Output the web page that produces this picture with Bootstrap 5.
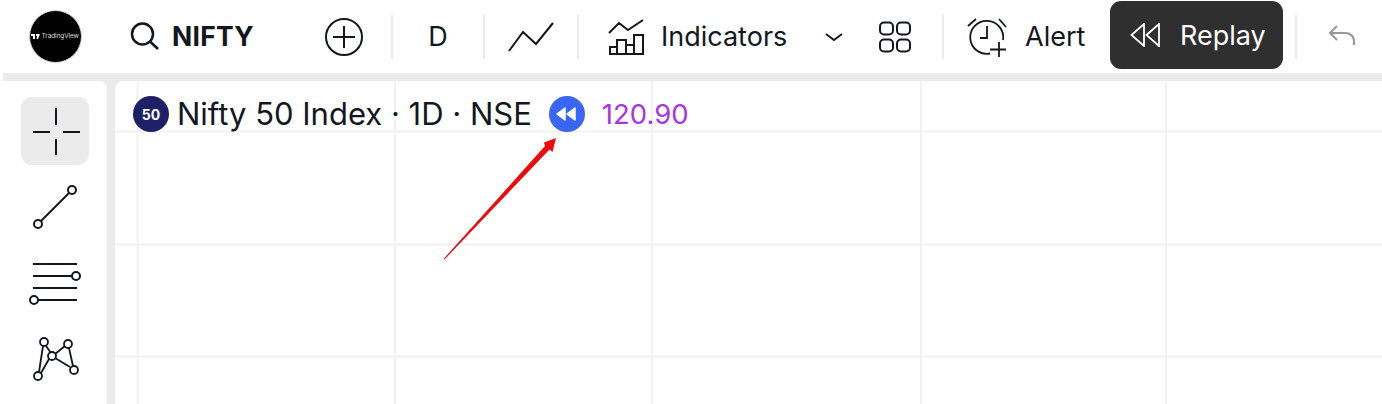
<!DOCTYPE html>
<html lang="en">
<head>
    <meta charset="UTF-8">
    <title>Nifty 50 Replay</title>
    <link href="https://cdn.jsdelivr.net/npm/bootstrap@5.3.3/dist/css/bootstrap.min.css" rel="stylesheet">
    <style>
        body {
            background: #fff;
            color: #131722;
            font-family: Inter, "Liberation Sans", sans-serif;
            height: 404px;
            overflow: hidden;
        }

        svg {
            display: block;
            flex-shrink: 0;
        }

        .tb {
            height: 73px;
        }

        .tb-text {
            font-size: 27px;
            line-height: 1;
        }

        .tb-logo {
            width: 110px;
        }

        .logo-mark {
            width: 53px;
            height: 53px;
            background: #000;
            border: 1px solid #ddd;
            color: #d8d8d8;
            font-size: 6.6px;
            letter-spacing: -0.15px;
            gap: 1.5px;
        }

        .tb-search {
            width: 192px;
            padding-left: 20px;
            gap: 12px;
        }

        .search-name {
            font-size: 26.5px;
            font-weight: 700;
            letter-spacing: 0.3px;
        }

        .tb-add {
            width: 84px;
            margin-right: 5px;
        }

        .tb-sep {
            width: 2px;
            height: 44px;
            background: #ebebeb;
        }

        .tb-d {
            width: 90px;
        }

        .tb-line {
            width: 92px;
        }

        .tb-ind {
            width: 363px;
            padding-left: 29px;
        }

        .ind-label {
            margin-left: 17px;
            width: 164px;
        }

        .ind-grid {
            margin-right: 30px;
        }

        .tb-alert {
            padding-left: 22px;
        }

        .alert-label {
            margin-left: 15px;
            width: 85px;
        }

        .replay-btn {
            width: 173px;
            height: 68px;
            margin-top: 1px;
            background: #2f2f2f;
            border-radius: 11px;
            color: #fff;
            padding-left: 20px;
            gap: 20px;
            margin-right: 12px;
        }

        .tb-undo {
            padding-left: 31px;
        }

        .main-area {
            background: #ebebeb;
            margin-left: 3px;
            padding-top: 8px;
            height: 331px;
            gap: 8px;
        }

        .side-tools {
            width: 104px;
            background: #fff;
            border-top-right-radius: 8px;
            padding: 16px 0 0 18px;
            gap: 8px;
        }

        .tool-cell {
            width: 68px;
            height: 68px;
            border-radius: 11px;
        }

        .tool-active {
            background: #ebebeb;
        }

        .chart-pane {
            background: #fff;
            border-top-left-radius: 8px;
        }

        .chart-overlay {
            position: absolute;
            top: 0;
            left: 0;
        }

        .chart-legend {
            position: relative;
            padding: 15px 0 0 18px;
        }

        .badge-50 {
            width: 36px;
            height: 36px;
            background: #1e2068;
            color: #fff;
            font-size: 14px;
            font-weight: 700;
        }

        .legend-title {
            font-size: 31px;
            margin-left: 8px;
            line-height: 36px;
        }

        .legend-replay {
            margin-left: 17px;
        }

        .legend-value {
            color: #a834e6;
            font-size: 27.5px;
            line-height: 36px;
            margin-left: 17px;
        }
    </style>
</head>
<body>
    <!-- Top toolbar -->
    <div class="tb d-flex">
        <div class="tb-logo d-flex align-items-center justify-content-center">
            <div class="logo-mark rounded-circle d-flex align-items-center justify-content-center">
                <svg width="9" height="5" viewBox="0 0 9 5"><path d="M0 0h4v5H2V2H0zM5 0h4L7 5H5.500L6 2H5z" fill="#fff"/></svg>
                <span>TradingView</span>
            </div>
        </div>

        <div class="tb-search d-flex align-items-center">
            <svg width="30" height="30" viewBox="0 0 30 30" fill="none" stroke="#131722" stroke-width="2.500"><circle cx="12.500" cy="12" r="10.500"/><path d="M20 19.500l8 7.500"/></svg>
            <span class="search-name">NIFTY</span>
        </div>

        <div class="tb-add d-flex align-items-center justify-content-center">
            <svg width="38" height="38" viewBox="0 0 38 38" fill="none" stroke="#131722" stroke-width="2"><circle cx="19" cy="19" r="18"/><path d="M8 19h22M19 8v22"/></svg>
        </div>
        <div class="tb-sep align-self-center"></div>

        <div class="tb-d tb-text d-flex align-items-center justify-content-center">D</div>
        <div class="tb-sep align-self-center"></div>

        <div class="tb-line d-flex align-items-center justify-content-center">
            <svg width="46" height="30" viewBox="0 0 46 30" fill="none" stroke="#131722" stroke-width="2"><path d="M1 29l14-19 13 12L45 1"/></svg>
        </div>
        <div class="tb-sep align-self-center"></div>

        <div class="tb-ind d-flex align-items-center">
            <svg width="36" height="38" viewBox="0 0 36 38" fill="none" stroke="#131722" stroke-width="2"><path d="M1 15l10-10 9 7L35 2M2 36v-7h7v7zM9 36V22h9v14zM18 36v-9h8v9zM26 36V17h9v19z"/></svg>
            <span class="ind-label tb-text">Indicators</span>
            <svg width="18" height="10" viewBox="0 0 18 10" fill="none" stroke="#131722" stroke-width="1.800"><path d="M1 2l8 6 8-6"/></svg>
            <svg class="ind-grid ms-auto" width="34" height="32" viewBox="0 0 34 32" fill="none" stroke="#131722" stroke-width="2"><rect x="2" y="1.500" width="13" height="12" rx="4"/><rect x="19" y="1.500" width="13" height="12" rx="4"/><rect x="2" y="18.500" width="13" height="12" rx="4"/><rect x="19" y="18.500" width="13" height="12" rx="4"/></svg>
        </div>
        <div class="tb-sep align-self-center"></div>

        <div class="tb-alert d-flex align-items-center">
            <svg width="44" height="42" viewBox="0 0 44 42" fill="none" stroke="#131722" stroke-width="1.800"><path d="M2 10l8-7M33 3l7 8M37 24A16.500 16.500 0 1 0 24 37.500M21 10v12h-7M33 26v15M24 33.500h16"/></svg>
            <span class="alert-label tb-text">Alert</span>
        </div>

        <div class="replay-btn tb-text d-flex align-items-center">
            <svg width="30" height="24" viewBox="0 0 30 24" fill="none" stroke="#fff" stroke-width="1.800"><path d="M1.500 12L14 1v22zM16.500 12L29 1v22z"/></svg>
            <span>Replay</span>
        </div>
        <div class="tb-sep align-self-center"></div>

        <div class="tb-undo d-flex align-items-center">
            <svg width="30" height="24" viewBox="0 0 30 24" fill="none" stroke="#979797" stroke-width="2"><path d="M9 1L2 8l7 7M2 8h15c5 0 9 3 9 8v4"/></svg>
        </div>
    </div>

    <div class="main-area d-flex">
        <!-- Left drawing tools -->
        <div class="side-tools d-flex flex-column">
            <div class="tool-cell tool-active">
                <svg width="68" height="68" viewBox="0 0 68 68" stroke="#131722" stroke-width="2"><path d="M12 35h17M42 35h17M35 11v17M35 42v16"/></svg>
            </div>
            <div class="tool-cell">
                <svg width="68" height="68" viewBox="0 0 68 68" fill="none" stroke="#131722" stroke-width="2"><circle cx="51" cy="17" r="4"/><circle cx="17" cy="51" r="4"/><path d="M48 20L20 48"/></svg>
            </div>
            <div class="tool-cell">
                <svg width="68" height="68" viewBox="0 0 68 68" fill="none" stroke="#131722" stroke-width="2"><path d="M12 15h44M12 27h39M12 39h44M17 51h39"/><circle cx="55" cy="27" r="4"/><circle cx="13" cy="51" r="4"/></svg>
            </div>
            <div class="tool-cell">
                <svg width="68" height="68" viewBox="0 0 68 68" fill="none" stroke="#131722" stroke-width="1.800"><path d="M22 21l-4 26M25 21l5 7M28 34l-8 14M34 29l10-8M48 23l4 18M34 33l15 9"/><circle cx="23" cy="17" r="4"/><circle cx="47" cy="19" r="4"/><circle cx="31" cy="31" r="4"/><circle cx="17" cy="51" r="4"/><circle cx="53" cy="45" r="4"/></svg>
            </div>
        </div>

        <!-- Chart -->
        <div class="chart-pane flex-grow-1 position-relative overflow-hidden">
            <svg class="chart-overlay" width="1267" height="323" viewBox="0 0 1267 323">
                <path d="M22.500 0v323M280 0v323M537 0v323M806 0v323M1051 0v323M0 50.500h1267M0 163.500h1267M0 275.500h1267" stroke="#f2f2f2" stroke-width="2"/>
                <path d="M328.500 178L430 65 429 61.500 441 57 437.500 71 434.500 68.500 329.500 178.500z" fill="#ee0a0a"/>
            </svg>
            <div class="chart-legend d-flex align-items-center">
                <div class="badge-50 rounded-circle d-flex align-items-center justify-content-center">50</div>
                <span class="legend-title">Nifty 50 Index · 1D · NSE</span>
                <svg class="legend-replay" width="36" height="36" viewBox="0 0 36 36"><circle cx="18" cy="18" r="18" fill="#3a66f5"/><path d="M8 18l8-6v12zM18 18l8-6v12z" fill="#fff" stroke="#fff" stroke-width="1.500" stroke-linejoin="round"/></svg>
                <span class="legend-value">120.90</span>
            </div>
        </div>
    </div>

    <script src="https://cdn.jsdelivr.net/npm/bootstrap@5.3.3/dist/js/bootstrap.bundle.min.js"></script>
</body>
</html>
